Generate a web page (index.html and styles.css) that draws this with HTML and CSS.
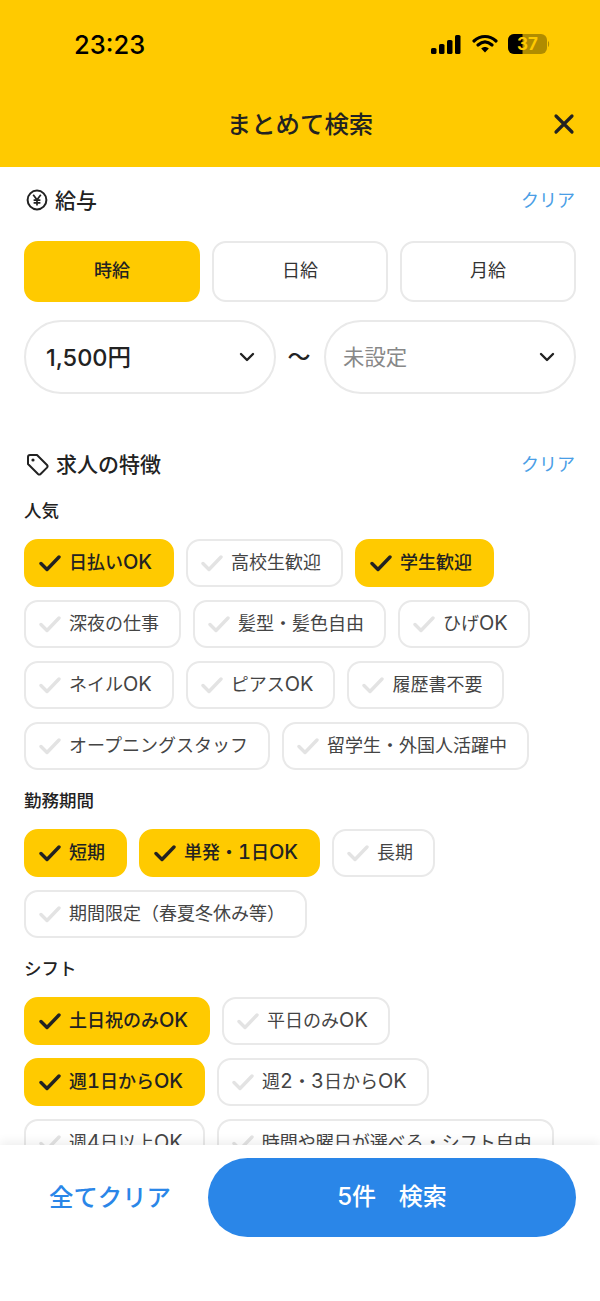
FILE: index.html
```html
<!DOCTYPE html>
<html lang="ja">
<head>
	<meta charset="utf-8" />
	<title>まとめて検索</title>
	<link rel="stylesheet" href="styles.css">
</head>
<body>
	<svg class="defs" width="0" height="0">
		<symbol id="check" viewBox="0 0 22 18">
			<path d="M2 9.5 L8 15.5 L20 3" fill="none" stroke="currentColor" stroke-width="3.4" stroke-linecap="round" stroke-linejoin="round" />
		</symbol>
		<symbol id="chevron" viewBox="0 0 16 10">
			<path d="M2 2 L8 8 L14 2" fill="none" stroke="currentColor" stroke-width="2.4" stroke-linecap="round" stroke-linejoin="round" />
		</symbol>
	</svg>

	<div class="page">
		<div class="header">
			<div class="status">
				<span class="time">23:23</span>
				<div class="status-icons">
					<svg width="30" height="19" viewBox="0 0 30 19">
						<rect x="0" y="13" width="5.5" height="6" rx="1.6" />
						<rect x="8" y="9" width="5.5" height="10" rx="1.6" />
						<rect x="16" y="5" width="5.5" height="14" rx="1.6" />
						<rect x="24" y="0" width="5.5" height="19" rx="1.6" />
					</svg>
					<svg width="26" height="20" viewBox="0 0 26 20">
						<path d="M2 7 C8.5 1 17.5 1 24 7 M6 11 C10.5 7 15.5 7 20 11" fill="none" stroke="#000" stroke-width="3.1" stroke-linecap="round" />
						<path d="M9.2 14.4 C11.5 12.4 14.5 12.4 16.8 14.4 L13 18.6 Z" />
					</svg>
					<svg class="battery" width="42" height="22" viewBox="0 0 42 22">
						<rect x="0" y="1" width="39" height="20" rx="6" fill="#b08c00" />
						<path d="M6 1 H14.5 V21 H6 A6 6 0 0 1 0 15 V7 A6 6 0 0 1 6 1 Z" fill="#000" />
						<path d="M40 8 C41.5 8.6 41.5 13.4 40 14 Z" fill="#b08c00" />
						<text x="19.5" y="17" text-anchor="middle" class="battery-text">37</text>
					</svg>
				</div>
			</div>
			<div class="titlebar">
				<h1 class="title">まとめて検索</h1>
				<svg class="close" width="22" height="22" viewBox="0 0 22 22">
					<path d="M3 3 L19 19 M19 3 L3 19" fill="none" stroke="#222" stroke-width="3.2" stroke-linecap="round" />
				</svg>
			</div>
		</div>

		<div class="scroll">
			<div class="section-head">
				<div class="section-title">
					<svg width="22" height="22" viewBox="0 0 22 22">
						<circle cx="11" cy="11" r="9.4" fill="none" stroke="#222" stroke-width="2" />
						<path d="M7.2 5.8 L11 10.8 L14.8 5.8 M11 10.8 V16.6 M7.6 11.2 H14.4 M7.6 13.8 H14.4" fill="none" stroke="#222" stroke-width="1.7" />
					</svg>
					<span>給与</span>
				</div>
				<span class="clear">クリア</span>
			</div>

			<div class="tabs">
				<div class="tab tab-on">時給</div>
				<div class="tab">日給</div>
				<div class="tab">月給</div>
			</div>

			<div class="range">
				<div class="select">
					<span class="select-value">1,500円</span>
					<svg class="chevron" width="16" height="10"><use href="#chevron" /></svg>
				</div>
				<span class="tilde">〜</span>
				<div class="select">
					<span class="select-empty">未設定</span>
					<svg class="chevron" width="16" height="10"><use href="#chevron" /></svg>
				</div>
			</div>

			<div class="section-head section-features">
				<div class="section-title">
					<svg width="23" height="23" viewBox="0 0 23 23">
						<path d="M2 4 A2 2 0 0 1 4 2 H11 L21 12 A2 2 0 0 1 21 14.6 L14.6 21 A2 2 0 0 1 12 21 L2 11 Z" fill="none" stroke="#222" stroke-width="2" stroke-linejoin="round" />
						<circle cx="7" cy="7" r="1.6" fill="#222" />
					</svg>
					<span>求人の特徴</span>
				</div>
				<span class="clear">クリア</span>
			</div>

			<div class="group-label">人気</div>
			<div class="chips">
				<div class="chip chip-on"><svg width="22" height="18"><use href="#check" /></svg><span>日払い<b class="lat">OK</b></span></div>
				<div class="chip"><svg width="22" height="18"><use href="#check" /></svg><span>高校生歓迎</span></div>
				<div class="chip chip-on"><svg width="22" height="18"><use href="#check" /></svg><span>学生歓迎</span></div>
				<div class="chip"><svg width="22" height="18"><use href="#check" /></svg><span>深夜の仕事</span></div>
				<div class="chip"><svg width="22" height="18"><use href="#check" /></svg><span>髪型・髪色自由</span></div>
				<div class="chip"><svg width="22" height="18"><use href="#check" /></svg><span>ひげ<b class="lat">OK</b></span></div>
				<div class="chip"><svg width="22" height="18"><use href="#check" /></svg><span>ネイル<b class="lat">OK</b></span></div>
				<div class="chip"><svg width="22" height="18"><use href="#check" /></svg><span>ピアス<b class="lat">OK</b></span></div>
				<div class="chip"><svg width="22" height="18"><use href="#check" /></svg><span>履歴書不要</span></div>
				<div class="chip"><svg width="22" height="18"><use href="#check" /></svg><span>オープニングスタッフ</span></div>
				<div class="chip"><svg width="22" height="18"><use href="#check" /></svg><span>留学生・外国人活躍中</span></div>
			</div>

			<div class="group-label">勤務期間</div>
			<div class="chips">
				<div class="chip chip-on"><svg width="22" height="18"><use href="#check" /></svg><span>短期</span></div>
				<div class="chip chip-on"><svg width="22" height="18"><use href="#check" /></svg><span>単発・<b class="lat">1</b>日<b class="lat">OK</b></span></div>
				<div class="chip"><svg width="22" height="18"><use href="#check" /></svg><span>長期</span></div>
				<div class="chip"><svg width="22" height="18"><use href="#check" /></svg><span>期間限定（春夏冬休み等）</span></div>
			</div>

			<div class="group-label">シフト</div>
			<div class="chips">
				<div class="chip chip-on"><svg width="22" height="18"><use href="#check" /></svg><span>土日祝のみ<b class="lat">OK</b></span></div>
				<div class="chip"><svg width="22" height="18"><use href="#check" /></svg><span>平日のみ<b class="lat">OK</b></span></div>
				<div class="chip chip-on"><svg width="22" height="18"><use href="#check" /></svg><span>週<b class="lat">1</b>日から<b class="lat">OK</b></span></div>
				<div class="chip"><svg width="22" height="18"><use href="#check" /></svg><span>週<b class="lat">2</b>・<b class="lat">3</b>日から<b class="lat">OK</b></span></div>
				<div class="chip"><svg width="22" height="18"><use href="#check" /></svg><span>週<b class="lat">4</b>日以上<b class="lat">OK</b></span></div>
				<div class="chip"><svg width="22" height="18"><use href="#check" /></svg><span>時間や曜日が選べる・シフト自由</span></div>
			</div>
		</div>

		<div class="footer">
			<div class="clear-all">全てクリア</div>
			<div class="search">5件&nbsp;&nbsp;検索</div>
		</div>
	</div>
</body>
</html>
```

FILE: styles.css
```css
body {
	margin: 0;
	background: #fff;
	color: #222;
	font-family: Inter, "Noto Sans CJK JP", sans-serif;
}

.defs {
	display: block;
	height: 0;
}

.page {
	display: flex;
	flex-direction: column;
	height: 1301px;
	overflow: hidden;
}

.header {
	flex: none;
	height: 167px;
	background: #ffca00;
}

.status {
	display: flex;
	align-items: center;
	justify-content: space-between;
	height: 30px;
	padding: 29px 50px 0 74px;
}

.time {
	font-size: 25.5px;
	font-weight: 500;
	color: #000;
}

.status-icons {
	display: flex;
	align-items: center;
	gap: 10.5px;
}

.battery-text {
	font-size: 17px;
	font-weight: 700;
	fill: #ffca00;
}

.titlebar {
	display: flex;
	align-items: center;
	justify-content: center;
	position: relative;
	margin-top: 33px;
	height: 60px;
}

.title {
	margin: 0;
	font-size: 24.4px;
	font-weight: 500;
	color: #222;
}

.close {
	position: absolute;
	right: 25px;
	top: 21px;
}

.scroll {
	flex: 1;
	min-height: 0;
	overflow: hidden;
	padding: 0 24px;
}

.section-head {
	display: flex;
	align-items: center;
	justify-content: space-between;
	height: 40px;
	margin-top: 13px;
}

.section-title {
	display: flex;
	align-items: center;
	gap: 7px;
	font-size: 21px;
	font-weight: 500;
}

.section-title span {
	padding-bottom: 2px;
}

.section-title svg {
	margin-left: 2px;
}

.clear {
	padding-bottom: 2px;
	font-size: 18px;
	color: #4a9ee6;
	margin-right: 1px;
}

.tabs {
	display: grid;
	grid-template-columns: repeat(3, 1fr);
	gap: 12px;
	margin-top: 21px;
}

.tab {
	display: flex;
	align-items: center;
	justify-content: center;
	height: 52px;
	padding-bottom: 5px;
	border: 2px solid #e9e9e9;
	border-radius: 14px;
	font-size: 18px;
	color: #333;
}

.tab-on {
	background: #ffca00;
	border-color: #ffca00;
	font-weight: 500;
	color: #222;
}

.range {
	display: flex;
	align-items: center;
	margin-top: 18px;
}

.select {
	flex: 1;
	display: flex;
	align-items: center;
	justify-content: space-between;
	height: 70px;
	padding: 0 19px;
	border: 2px solid #e9e9e9;
	border-radius: 37px;
}

.select-value {
	margin-left: 1px;
	padding-bottom: 2px;
	font-size: 23.5px;
	font-weight: 500;
}

.select-empty {
	padding-bottom: 3px;
	margin-left: -2px;
	font-size: 21.4px;
	color: #888;
}

.chevron {
	color: #222;
}

.tilde {
	flex: none;
	width: 48px;
	padding: 0 2px 4px 0;
	box-sizing: border-box;
	text-align: center;
	font-size: 23px;
	font-weight: 500;
}

.section-features {
	margin-top: 50px;
}

.group-label {
	font-size: 17.5px;
	font-weight: 500;
	line-height: 26px;
	margin-top: 14px;
	margin-bottom: 15px;
}

.chips + .group-label {
	margin-top: 18px;
}

.chips {
	display: flex;
	flex-wrap: wrap;
	gap: 13px 12px;
}

.chip {
	display: flex;
	align-items: center;
	gap: 8px;
	height: 40px;
	padding: 0 20px 4px 13px;
	border: 2px solid #e9e9e9;
	border-radius: 14px;
	font-size: 18px;
	color: #444;
}

.chip svg {
	margin-top: 4px;
	color: #e3e3e3;
}

.chip .lat {
	font-size: 20px;
	font-weight: inherit;
	line-height: 1;
	font-variant-numeric: tabular-nums;
}

.chip-on {
	background: #ffca00;
	border-color: #ffca00;
	font-weight: 500;
	color: #222;
}

.chip-on svg {
	color: #222;
}

.footer {
	flex: none;
	display: flex;
	gap: 12px;
	align-items: flex-start;
	height: 143px;
	padding: 13px 24px 0;
	background: #fff;
	box-shadow: 0 -3px 10px rgba(0, 0, 0, 0.07);
	position: relative;
}

.clear-all {
	flex: none;
	width: 172px;
	height: 78px;
	line-height: 78px;
	text-align: center;
	font-size: 24.4px;
	font-weight: 500;
	color: #2a86e8;
}

.search {
	flex: 1;
	height: 78px;
	padding-bottom: 1px;
	line-height: 78px;
	border-radius: 40px;
	background: #2a86e8;
	text-align: center;
	font-size: 24px;
	font-weight: 500;
	word-spacing: 5px;
	color: #fff;
}
```
